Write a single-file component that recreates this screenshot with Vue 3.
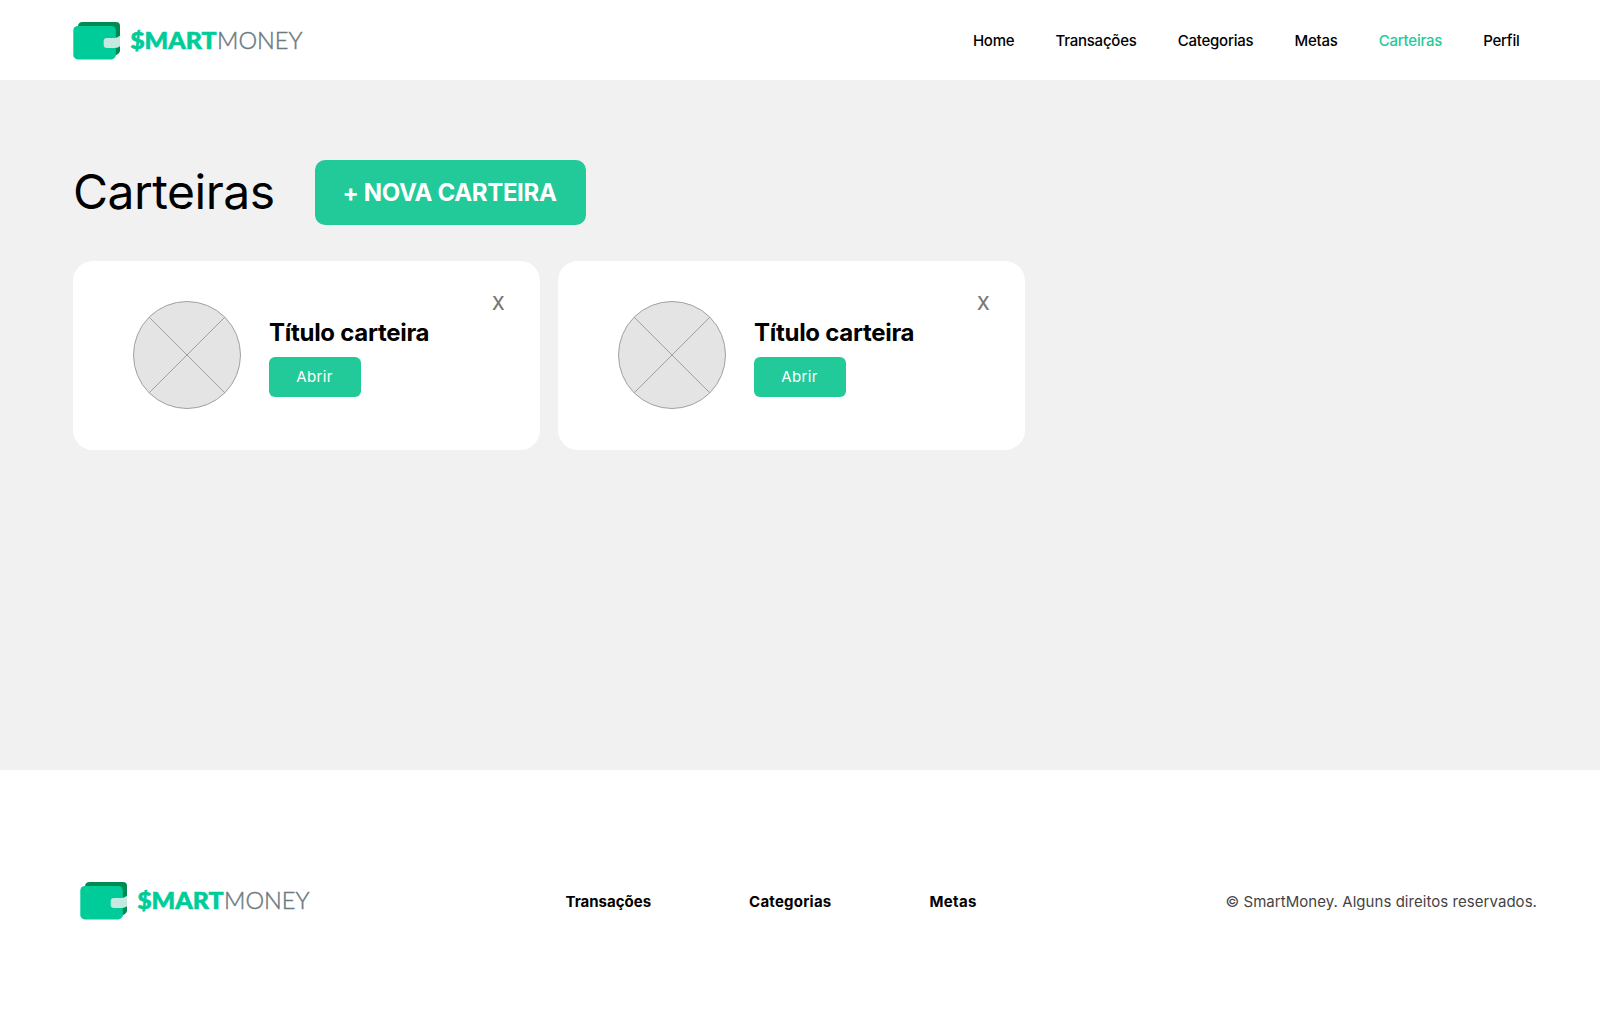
<script setup>
import { h } from 'vue'

const navItems = [
  { label: 'Home' },
  { label: 'Transações' },
  { label: 'Categorias' },
  { label: 'Metas' },
  { label: 'Carteiras', active: true },
  { label: 'Perfil' },
]
const wallets = [
  { id: 1, title: 'Título carteira' },
  { id: 2, title: 'Título carteira' },
]
const footerLinks = ['Transações', 'Categorias', 'Metas']

const BrandLogo = () =>
  h('svg', { width: 232, height: 40, viewBox: '0 0 232 40', role: 'img', 'aria-label': 'SmartMoney' }, [
    h('path', { d: 'M9.5 0H43Q47 0 47 4V28.5Q47 31.5 42 33.5L5 8V4Q5.5 0 9.5 0Z', fill: '#008a52' }),
    h('rect', { x: 0.3, y: 3.9, width: 42.5, height: 33.5, rx: 4.5, fill: '#00cc99' }),
    h('path', { d: 'M34 16H41Q44 16 47 13.7V24.2Q45 26 42 26H34Q30.7 26 30.7 22.8V19.2Q30.7 16 34 16Z', fill: '#c6e9df' }),
    h('text', { x: 57.2, y: 27.2, textLength: 86.3, lengthAdjust: 'spacingAndGlyphs', fill: '#00cc99', stroke: '#00cc99', 'stroke-width': 0.6, 'font-family': 'Lato, sans-serif', 'font-size': 23.3, 'font-weight': 900 }, '$MART'),
    h('text', { x: 144, y: 27.2, textLength: 85.5, lengthAdjust: 'spacingAndGlyphs', fill: '#6c7a82', stroke: '#6c7a82', 'stroke-width': 0.45, 'font-family': 'Lato, sans-serif', 'font-size': 23.5, 'font-weight': 300 }, 'MONEY'),
  ])
</script>

<template>
  <div class="page">
    <header class="header">
      <BrandLogo />
      <nav class="nav">
        <a v-for="item in navItems" :key="item.label" :class="{ active: item.active }">{{ item.label }}</a>
      </nav>
    </header>

    <main class="main">
      <div class="heading">
        <h1>Carteiras</h1>
        <button class="new-wallet">+ NOVA CARTEIRA</button>
      </div>
      <section class="cards">
        <article v-for="wallet in wallets" :key="wallet.id" class="card">
          <svg class="avatar" width="108" height="108" viewBox="0 0 108 108">
            <circle cx="54" cy="54" r="53.5" fill="#e4e4e4" stroke="#a0a0a0" />
            <path d="M16.2 16.2L91.8 91.8M91.8 16.2L16.2 91.8" stroke="#a0a0a0" />
          </svg>
          <div class="info">
            <h2>{{ wallet.title }}</h2>
            <button class="open">Abrir</button>
          </div>
          <button class="close">X</button>
        </article>
      </section>
    </main>

    <footer class="footer">
      <BrandLogo />
      <nav class="footer-nav">
        <a v-for="link in footerLinks" :key="link">{{ link }}</a>
      </nav>
      <p class="copyright">© SmartMoney. Alguns direitos reservados.</p>
    </footer>
  </div>
</template>

<style>
body {
  margin: 0;
}
</style>

<style scoped>
.page {
  width: 1600px;
  height: 1034px;
  display: flex;
  flex-direction: column;
  overflow: hidden;
  background: #fff;
  color: #000;
  font-family: Inter, sans-serif;
}
button {
  border: 0;
  padding: 0;
  font-family: inherit;
  color: #fff;
  background: #22ca99;
}
h1, h2, p {
  margin: 0;
}
.header {
  box-sizing: border-box;
  height: 80px;
  padding: 22px 80.5px 0 73px;
  display: flex;
  justify-content: space-between;
  align-items: flex-start;
}
.nav {
  display: flex;
  gap: 41px;
  font-size: 15px;
  line-height: 20px;
  padding-top: 9px;
  font-weight: 500;
  letter-spacing: -0.22px;
}
.nav .active {
  color: #22ca99;
}
.main {
  box-sizing: border-box;
  height: 690px;
  padding: 80px 73px 0;
  background: #f1f1f1;
}
.heading {
  display: flex;
  height: 65px;
  align-items: center;
}
h1 {
  width: 242px;
  padding-bottom: 2px;
  font-size: 48px;
  font-weight: 400;
  letter-spacing: -0.5px;
  line-height: 58px;
}
.new-wallet {
  width: 271px;
  height: 65px;
  padding-right: 2px;
  border-radius: 10px;
  font-size: 24px;
  font-weight: 700;
  letter-spacing: -0.35px;
}
.cards {
  display: flex;
  gap: 18px;
  margin-top: 36px;
}
.card {
  box-sizing: border-box;
  width: 467px;
  height: 189px;
  padding: 40px 36px 0 60px;
  display: flex;
  border-radius: 20px;
  background: #fff;
}
.info {
  margin: 17px 0 0 28px;
}
h2 {
  font-size: 24px;
  line-height: 29px;
  font-weight: 700;
  letter-spacing: -0.28px;
}
.open {
  display: block;
  width: 92px;
  height: 40px;
  margin-top: 10px;
  padding: 0 1px 2px 0;
  border-radius: 6px;
  font-size: 15px;
  letter-spacing: 0.4px;
}
.close {
  align-self: flex-start;
  margin: -9px 0 0 auto;
  font-size: 18px;
  line-height: 24px;
  font-weight: 500;
  letter-spacing: -0.5px;
  color: #777;
  background: none;
}
.footer {
  height: 264px;
  padding: 0 63px 0 80px;
  display: flex;
  align-items: flex-start;
}
.footer > svg {
  margin-top: 112px;
}
.footer-nav {
  display: flex;
  gap: 98px;
  margin: 122px 0 0 253.5px;
  font-size: 15px;
  line-height: 20px;
  font-weight: 700;
}
.footer-nav a:nth-child(2) {
  letter-spacing: 0.22px;
}
.footer-nav a:nth-child(3) {
  letter-spacing: 0.35px;
}
.copyright {
  margin: 122px 0 0 auto;
  font-size: 15px;
  line-height: 20px;
  letter-spacing: 0.05px;
  color: #444;
}
</style>
